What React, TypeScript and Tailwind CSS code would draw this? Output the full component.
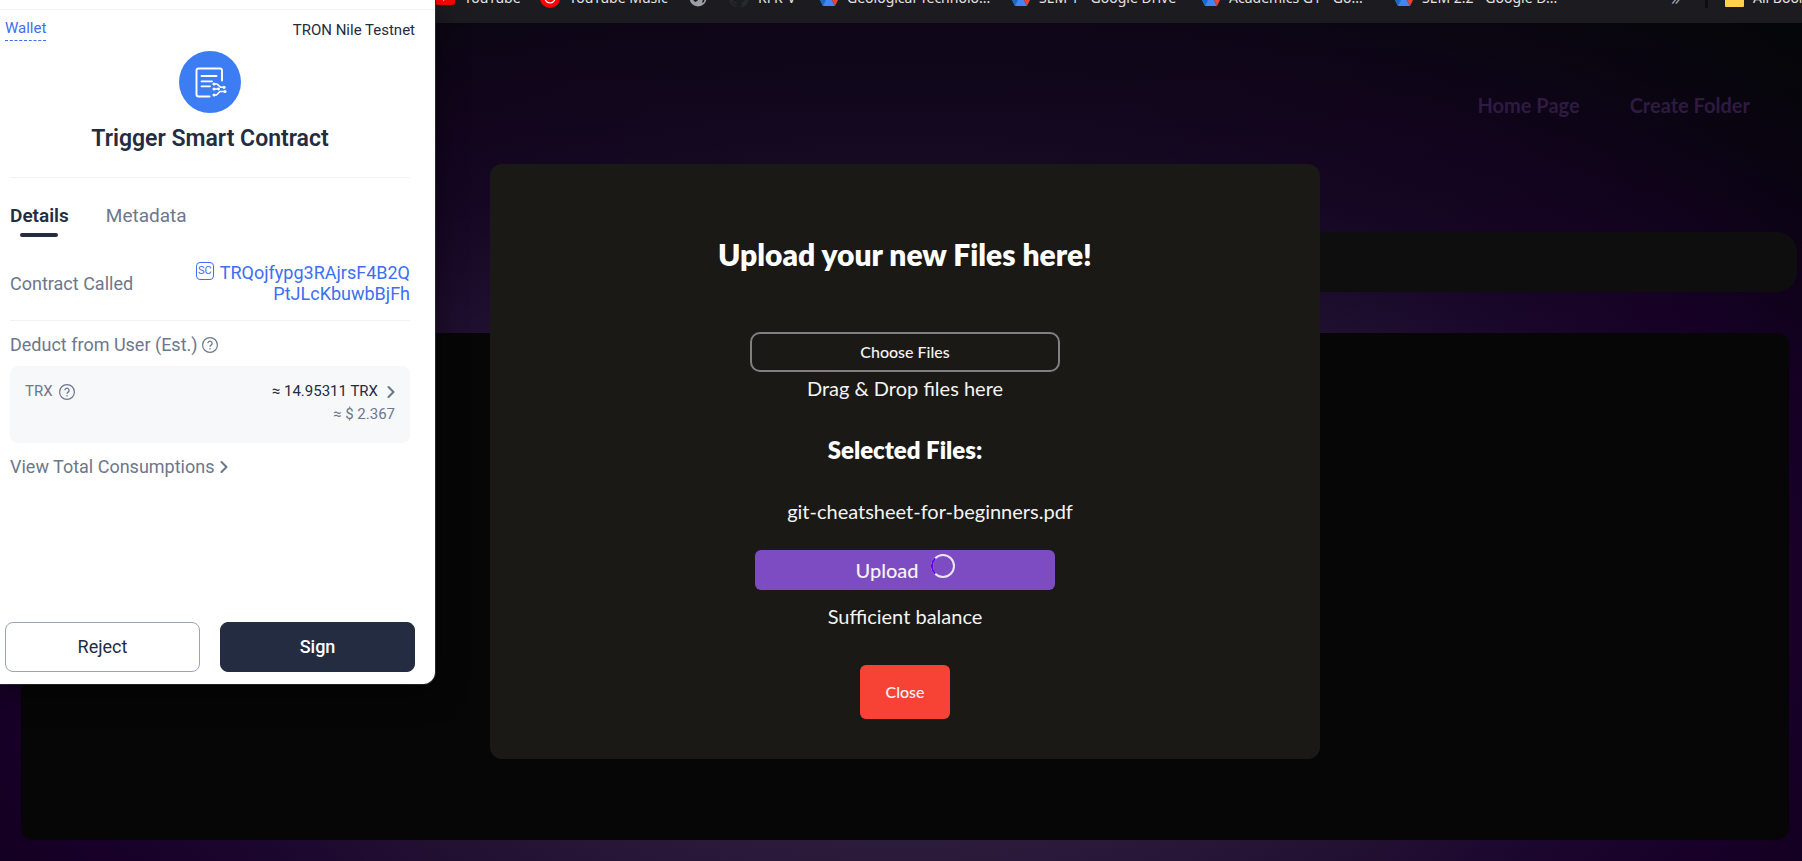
import React from "react";
import { ChevronRight } from "lucide-react";

function DriveIcon() {
  return (
    <svg viewBox="0 0 18 16" className="h-4 w-[18px] shrink-0" aria-hidden="true">
      <path d="M6 0h6l6 10h-6z" fill="#fbbc04" />
      <path d="M6 0 0 10l3 6 6-11z" fill="#34a853" />
      <path d="M0 10h6l-3 6z" fill="#1a67d2" />
      <path d="M6 10h6l3 6H3z" fill="#4285f4" />
      <path d="M12 10h6l-3 6z" fill="#ea4335" />
    </svg>
  );
}

function YouTubeIcon() {
  return (
    <svg viewBox="0 0 20 14" className="h-[14px] w-5 shrink-0" aria-hidden="true">
      <rect width="20" height="14" rx="3" fill="#f00" />
      <path d="m8 4 5 3-5 3z" fill="#fff" />
    </svg>
  );
}

function MusicIcon() {
  return (
    <svg viewBox="0 0 20 20" className="h-5 w-5 shrink-0" aria-hidden="true">
      <circle cx="10" cy="10" r="10" fill="#f00" />
      <circle cx="10" cy="10" r="5" fill="none" stroke="#fff" strokeWidth="1.2" />
      <path d="m8.500 7.500 4 2.500-4 2.500z" fill="#fff" />
    </svg>
  );
}

function GlobeIcon() {
  return (
    <svg viewBox="0 0 18 18" className="h-[18px] w-[18px] shrink-0" aria-hidden="true">
      <circle cx="9" cy="9" r="8.500" fill="#9aa0a6" />
      <path d="M3 5c3-1 5 0 5 2s3 1 2 3-2 1-3 3c-2 0-5-4-4-8zM10 2c3 0 6 3 6 6l-1 5-2 1 1-4-2-2z" fill="#1c1b1f" />
    </svg>
  );
}

function GithubIcon() {
  return (
    <svg viewBox="0 0 20 20" className="h-5 w-5 shrink-0" aria-hidden="true">
      <path
        d="M10 0a10 10 0 0 0-3.200 19.500c.5.1.7-.2.7-.5v-1.800c-2.800.6-3.400-1.300-3.400-1.300-.5-1.200-1.100-1.500-1.100-1.500-.9-.6.1-.6.1-.6 1 .1 1.500 1 1.500 1 .9 1.500 2.300 1.100 2.900.8.1-.6.3-1.100.6-1.300-2.200-.3-4.500-1.100-4.500-5 0-1.100.4-2 1-2.700-.1-.2-.4-1.200.1-2.600 0 0 .8-.3 2.700 1a9.500 9.500 0 0 1 5 0c1.900-1.300 2.700-1 2.700-1 .5 1.400.2 2.400.1 2.600.6.7 1 1.600 1 2.700 0 3.900-2.300 4.700-4.500 5 .4.300.7.9.7 1.800V19c0 .3.200.6.7.5A10 10 0 0 0 10 0z"
        fill="#24292e"
      />
    </svg>
  );
}

function HelpIcon() {
  return (
    <svg viewBox="0 0 16 16" className="h-4 w-4 shrink-0" fill="none" stroke="#6d778c" aria-hidden="true">
      <circle cx="8" cy="8" r="7.400" strokeWidth="1.200" />
      <path d="M5.900 6.300a2.100 2.100 0 1 1 3.200 1.800c-.8.5-1.100.8-1.100 1.600" strokeWidth="1.300" />
      <circle cx="8" cy="11.700" r=".8" fill="#6d778c" stroke="none" />
    </svg>
  );
}

function ContractIcon() {
  return (
    <svg viewBox="0 0 62 62" className="size-[62px]" fill="none" stroke="#fff" strokeLinecap="round" strokeLinejoin="round" aria-hidden="true">
      <circle cx="31" cy="31" r="31" fill="#3c7df3" stroke="none" />
      <path d="M30.500 45.500H19.500a2 2 0 0 1-2-2v-24a2 2 0 0 1 2-2h21.500a2 2 0 0 1 2 2v10" strokeWidth="1.900" />
      <path d="M22.500 25h15M22.500 30.300h10.500M22.500 35.300h8.500" strokeWidth="1.800" />
      <path d="M34.500 33h3.500l3.500 3.200h3.500M34.500 38h5M34.500 44h3l3.500-3.500h5" strokeWidth="1.600" />
      <g fill="#fff" stroke="none">
        <circle cx="35" cy="33" r="1.500" /><circle cx="45" cy="36.300" r="1.600" />
        <circle cx="35" cy="38" r="1.500" /><circle cx="39.500" cy="38" r="1.400" />
        <circle cx="35" cy="44" r="1.500" /><circle cx="46" cy="40.500" r="1.600" />
      </g>
    </svg>
  );
}

function Spinner() {
  return (
    <svg viewBox="0 0 24 24" className="mb-2 size-6" fill="none" strokeWidth="2" role="img" aria-label="Uploading">
      <circle cx="12" cy="12" r="11" stroke="#ece6f6" />
      <path d="M4.200 4.200a11 11 0 0 0 0 15.600" stroke="#6200ee" />
    </svg>
  );
}

function BookmarksBar() {
  const item = "flex shrink-0 items-center gap-[9px]";
  return (
    <nav aria-label="Bookmarks" className="flex h-[23px] items-start overflow-hidden bg-[#1c1b1f] pl-[435px] font-[Noto_Sans,sans-serif] text-sm leading-5 text-[#e3e3e3]">
      <div className="-mt-3 flex h-5 w-full items-center whitespace-nowrap">
        <a href="#youtube" className={`${item} w-[105px]`}><YouTubeIcon />YouTube</a>
        <a href="#music" className={`${item} w-[149px]`}><MusicIcon />YouTube Music</a>
        <a href="#site" aria-label="Site" className={`${item} w-[40px]`}><GlobeIcon /></a>
        <a href="#rfr" className={`${item} w-[91px]`}><GithubIcon />RFR-V</a>
        <a href="#geo" className={`${item} w-[192px]`}><DriveIcon />Geological Technolo...</a>
        <a href="#sem1" className={`${item} w-[190px]`}><DriveIcon />SEM 1 - Google Drive</a>
        <a href="#academics" className={`${item} w-[193px]`}><DriveIcon />Academics G1 - Go...</a>
        <a href="#sem2" className={`${item} w-[276px]`}><DriveIcon />SEM 2.2 - Google D...</a>
        <button type="button" aria-label="More bookmarks" className="w-[34px] shrink-0 text-left text-lg leading-5 text-[#9aa0a6]">»</button>
        <span className="h-5 w-[3px] shrink-0 bg-[#0e0e10]" />
        <a href="#all" className={`${item} ml-[17px]`}>
          <svg viewBox="0 0 19 17" className="h-[17px] w-[19px]" aria-hidden="true"><path d="M0 1h7l2 2h10v13a1 1 0 0 1-1 1H1a1 1 0 0 1-1-1z" fill="#ffd04f" /></svg>
          All Bookmarks
        </a>
      </div>
    </nav>
  );
}

function WalletPopup() {
  return (
    <aside aria-label="Wallet request" className="absolute left-0 top-0 flex h-[684px] w-[435px] flex-col rounded-br-xl bg-white font-[Roboto,sans-serif] text-[#232c41] shadow-[0_8px_30px_rgba(0,0,0,0.5),0_0_0_1px_#303136]">
      <div className="h-[10px] shrink-0 border-b border-[#f1f2f4]" />
      <header className="flex items-start justify-between pl-[5px] pr-5 pt-[7px] text-[15px] leading-[22px]">
        <a href="#wallet" className="border-b border-dashed border-[#3c6ff3] pb-px text-[#3c6ff3]">Wallet</a>
        <span className="pt-[2px]">TRON Nile Testnet</span>
      </header>
      <div className="flex flex-col items-center pt-[10px] pr-[15px]">
        <ContractIcon />
        <h1 className="mt-[10px] text-[23px] font-semibold leading-8">Trigger Smart Contract</h1>
      </div>
      <div className="mt-[22px] ml-[10px] mr-[25px] border-t border-[#f1f2f4]">
        <div role="tablist" className="flex gap-[37px] pt-[26px] text-[19px] leading-6">
          <button type="button" role="tab" aria-selected="true" className="flex flex-col items-center gap-[5px] font-semibold">
            Details
            <span className="h-1 w-[38px] rounded-full bg-[#232c41]" />
          </button>
          <button type="button" role="tab" aria-selected="false" className="self-start text-[#6d778c]">Metadata</button>
        </div>
        <div className="mt-[25px] flex items-center justify-between border-b border-[#f1f2f4] pb-4 text-lg leading-[21px]">
          <span className="text-[#6d778c]">Contract Called</span>
          <div className="flex items-start gap-[6px] text-right text-[#3c6ff3]">
            <span className="flex size-[18px] items-center justify-center rounded-sm border border-[#3c6ff3] text-[11px] leading-4">SC</span>
            <a href="#contract">TRQojfypg3RAjrsF4B2Q<br />PtJLcKbuwbBjFh</a>
          </div>
        </div>
        <div className="mt-3 flex items-center gap-1 text-lg leading-6 text-[#6d778c]">Deduct from User (Est.)<HelpIcon /></div>
        <div className="mt-[9px] flex h-[77px] justify-between rounded-lg bg-[#f7f8fa] px-[15px] pt-[14px] text-[15px] leading-[23px] text-[#6d778c]">
          <span className="flex h-[23px] items-center gap-[6px]">TRX <HelpIcon /></span>
          <div className="text-right">
            <button type="button" className="flex items-center text-[#232c41]">≈ 14.95311 TRX<ChevronRight className="-mr-[6px] ml-[3px] size-5 text-[#6d778c]" strokeWidth={2.5} /></button>
            <div>≈ $ 2.367</div>
          </div>
        </div>
        <button type="button" className="mt-3 flex items-center text-lg leading-6 text-[#6d778c]">View Total Consumptions<ChevronRight className="size-5" strokeWidth={2.5} /></button>
      </div>
      <footer className="mt-auto flex gap-5 pb-3 pl-[5px] pr-5 text-lg">
        <button type="button" className="h-[50px] flex-1 rounded-lg border border-[#9aa3b8]">Reject</button>
        <button type="button" className="h-[50px] flex-1 rounded-lg border border-[#232c41] bg-[#232c41] font-medium text-white">Sign</button>
      </footer>
    </aside>
  );
}

function UploadDialog() {
  return (
    <section role="dialog" aria-label="Upload files" className="absolute left-[490px] right-[482px] top-[164px] flex h-[595px] flex-col items-center rounded-xl bg-[#1a1916] pt-[70px] text-xl text-[#f4f4f4]">
      <h2 className="text-3xl font-extrabold leading-10 text-white">Upload your new Files here!</h2>
      <button type="button" className="mt-[58px] h-10 w-[310px] rounded-[10px] border-2 border-[#808080] text-base font-medium">Choose Files</button>
      <p className="leading-8">Drag &amp; Drop files here</p>
      <h3 className="mt-7 text-2xl font-extrabold leading-9 text-white">Selected Files:</h3>
      <ul className="mt-[26px] pl-[50px] leading-[34px]"><li>git-cheatsheet-for-beginners.pdf</li></ul>
      <button type="button" className="mt-[22px] flex h-10 w-[300px] items-center justify-center gap-3 rounded-md bg-[#7d4cc2] pb-px font-medium">Upload<Spinner /></button>
      <p className="mt-2 leading-9">Sufficient balance</p>
      <button type="button" className="mt-[31px] h-[54px] w-[90px] rounded-md bg-[#f64336] pb-px text-base font-medium">Close</button>
    </section>
  );
}

export default function App() {
  return (
    <div className="relative flex min-h-screen flex-col overflow-hidden bg-[#05000a] font-[Lato,sans-serif]">
      <BookmarksBar />
      <main className="flex flex-1 flex-col bg-[linear-gradient(to_bottom,rgba(8,10,12,0.6)_0%,rgba(8,10,12,0.25)_25%,transparent_45%),radial-gradient(1000px_640px_at_50%_577px,#302a38_0%,#2b1a3a_40%,#221033_60%,#1b062d_75%,#180028_90%,#120020_100%,#020106_125%)]">
        <nav aria-label="Main" className="flex justify-end gap-[50px] pr-[52px] pt-[67px] text-xl font-bold leading-[30px] text-[#2f1a42]">
          <a href="#home">Home Page</a>
          <a href="#create">Create Folder</a>
        </nav>
        <div className="ml-[33%] mr-[5px] mt-28 h-[60px] rounded-[20px] bg-[#0e0e0e]" />
        <div className="mb-[21px] ml-[21px] mr-[13px] mt-[41px] flex-1 rounded-xl bg-[#060606]" />
      </main>
      <UploadDialog />
      <WalletPopup />
    </div>
  );
}
